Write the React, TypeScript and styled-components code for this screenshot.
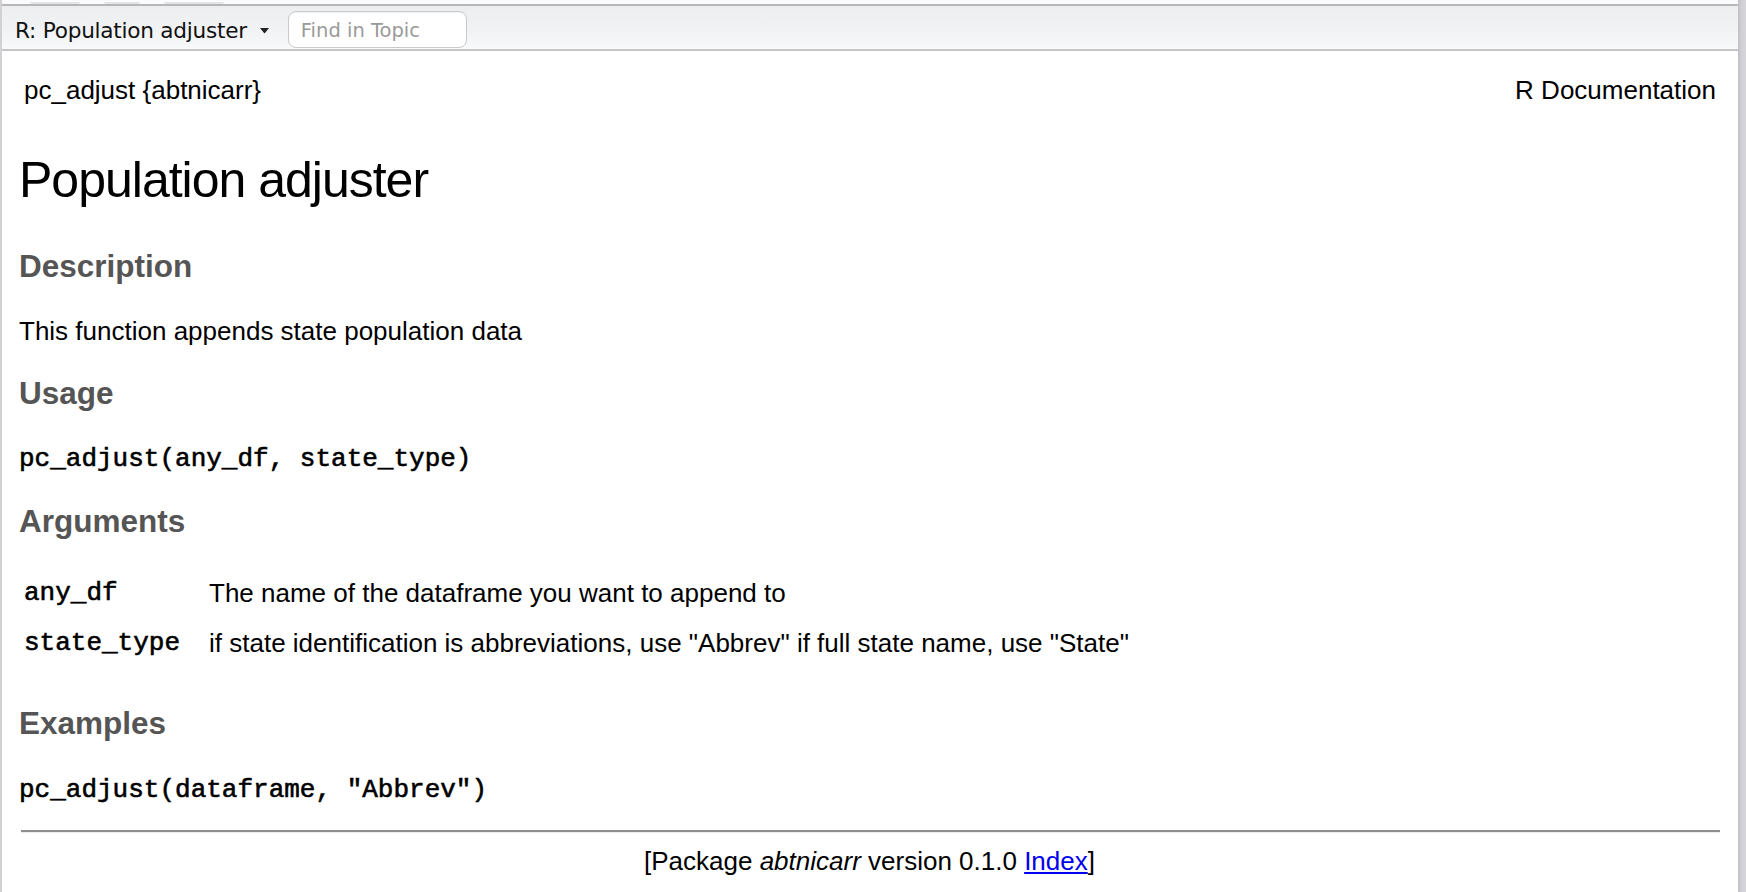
import React from "react";
import styled, { createGlobalStyle } from "styled-components";

const Global = createGlobalStyle`
  html, body { margin: 0; padding: 0; background: #ffffff; overflow: hidden; }
  body { font-family: "Liberation Sans", Arial, sans-serif; }
`;

const Frame = styled.div`
  display: flex;
  width: 1746px;
  height: 892px;
  overflow: hidden;
`;

const Pane = styled.div`
  flex: 1;
  display: flex;
  flex-direction: column;
  border-left: 2px solid #d2d2d4;
  min-width: 0;
`;

const ScrollEdge = styled.div`
  width: 8px;
  background: linear-gradient(to right, #bfbfc3 0, #cfcfd3 3px, #d8d8dc 8px);
`;

const TopStrip = styled.div`
  height: 4px;
  background: #fbfbfb;
  border-bottom: 2px solid #b6b7b9;
  display: flex;
  gap: 24px;
  padding-left: 28px;
  align-items: flex-end;
`;

const StripButton = styled.span<{ $w: number }>`
  width: ${(p) => p.$w}px;
  height: 2px;
  border-radius: 0 0 6px 6px;
  background: #e4e4e6;
`;

const Toolbar = styled.div`
  height: 45px;
  display: flex;
  align-items: center;
  padding: 2px 0 0 13px;
  box-sizing: border-box;
  background: linear-gradient(to bottom, #eceef0 0%, #f0f2f3 55%, #f8f9fa 100%);
  border-bottom: 2px solid #c4c5c7;
`;

const TopicMenu = styled.div`
  display: flex;
  align-items: center;
  gap: 13px;
  margin-top: 3px;
  font-family: "DejaVu Sans", "Lucida Grande", sans-serif;
  font-size: 21.6px;
  color: #111;
  letter-spacing: -0.25px;
`;

const Caret = styled.svg`
  width: 9px;
  height: 6px;
  margin-top: 2px;
`;

const FindBox = styled.div`
  margin-left: 19px;
  width: 165px;
  height: 33px;
  box-sizing: content-box;
  border: 1.5px solid #c9cacc;
  border-radius: 8px;
  background: #ffffff;
  display: flex;
  align-items: center;
  padding: 2px 0 0 12px;
  font-family: "DejaVu Sans", "Lucida Grande", sans-serif;
  font-size: 19.5px;
  color: #9a9a9a;
  box-shadow: inset 0 1px 1px rgba(0, 0, 0, 0.06);
  margin-top: 1px;
`;

const Doc = styled.div`
  flex: 1;
  padding: 24px 18px 0 17px;
  color: #000;
  font-family: "Liberation Sans", Arial, Helvetica, sans-serif;
  font-size: 26px;
`;

const HeaderRow = styled.div`
  display: flex;
  justify-content: space-between;
  line-height: 30px;
  padding: 0 4px 0 5px;
`;

const Title = styled.h2`
  margin: 46px 0 0 0;
  font-size: 50px;
  font-weight: normal;
  line-height: 58px;
  letter-spacing: -1px;
  color: #000;
`;

const SectionHeading = styled.h3<{ $top: number }>`
  margin: ${(p) => p.$top}px 0 0 0;
  font-size: 31.5px;
  font-weight: bold;
  line-height: 38px;
  color: #555555;
`;

const Para = styled.p<{ $top: number }>`
  margin: ${(p) => p.$top}px 0 0 0;
  line-height: 30px;
`;

const Code = styled.pre<{ $top: number }>`
  margin: ${(p) => p.$top}px 0 0 0;
  font-family: "Liberation Mono", "Courier New", monospace;
  font-size: 26px;
  line-height: 30px;
  font-weight: normal;
  color: #000;
  -webkit-text-stroke: 0.6px #000;
`;

const ArgTable = styled.div`
  margin-top: 28px;
  display: grid;
  grid-template-columns: 185px 1fr;
  grid-auto-rows: 50px;
  align-items: center;
  padding-left: 5px;
`;

const ArgName = styled.code`
  font-family: "Liberation Mono", "Courier New", monospace;
  font-size: 26px;
  font-weight: normal;
  color: #000;
  -webkit-text-stroke: 0.6px #000;
`;

const ArgDesc = styled.span`
  line-height: 30px;
`;

const Rule = styled.hr`
  margin: 25px 0 0 2px;
  border: none;
  border-top: 2px solid #8e8e8e;
  border-bottom: 1px solid #ededed;
  height: 0;
`;

const Footer = styled.div`
  margin-top: 13px;
  text-align: center;
  line-height: 30px;
`;

const Link = styled.a`
  color: #0000ee;
  text-decoration: underline;
`;

export default function App() {
  return (
    <>
      <Global />
      <Frame>
        <Pane>
          <TopStrip>
            <StripButton $w={50} />
            <StripButton $w={36} />
            <StripButton $w={60} />
          </TopStrip>
          <Toolbar>
            <TopicMenu>
              <span>R: Population adjuster</span>
              <Caret viewBox="0 0 9 6">
                <path d="M0 0 L9 0 L4.5 5.5 Z" fill="#222" />
              </Caret>
            </TopicMenu>
            <FindBox>Find in Topic</FindBox>
          </Toolbar>
          <Doc>
            <HeaderRow>
              <span>pc_adjust {"{abtnicarr}"}</span>
              <span>R Documentation</span>
            </HeaderRow>
            <Title>Population adjuster</Title>
            <SectionHeading $top={38}>Description</SectionHeading>
            <Para $top={31}>This function appends state population data</Para>
            <SectionHeading $top={28}>Usage</SectionHeading>
            <Code $top={32}>pc_adjust(any_df, state_type)</Code>
            <SectionHeading $top={28}>Arguments</SectionHeading>
            <ArgTable>
              <ArgName>any_df</ArgName>
              <ArgDesc>The name of the dataframe you want to append to</ArgDesc>
              <ArgName>state_type</ArgName>
              <ArgDesc>
                if state identification is abbreviations, use "Abbrev" if full state name, use "State"
              </ArgDesc>
            </ArgTable>
            <SectionHeading $top={36}>Examples</SectionHeading>
            <Code $top={33}>pc_adjust(dataframe, "Abbrev")</Code>
            <Rule />
            <Footer>
              [Package <i>abtnicarr</i> version 0.1.0 <Link href="#">Index</Link>]
            </Footer>
          </Doc>
        </Pane>
        <ScrollEdge />
      </Frame>
    </>
  );
}
